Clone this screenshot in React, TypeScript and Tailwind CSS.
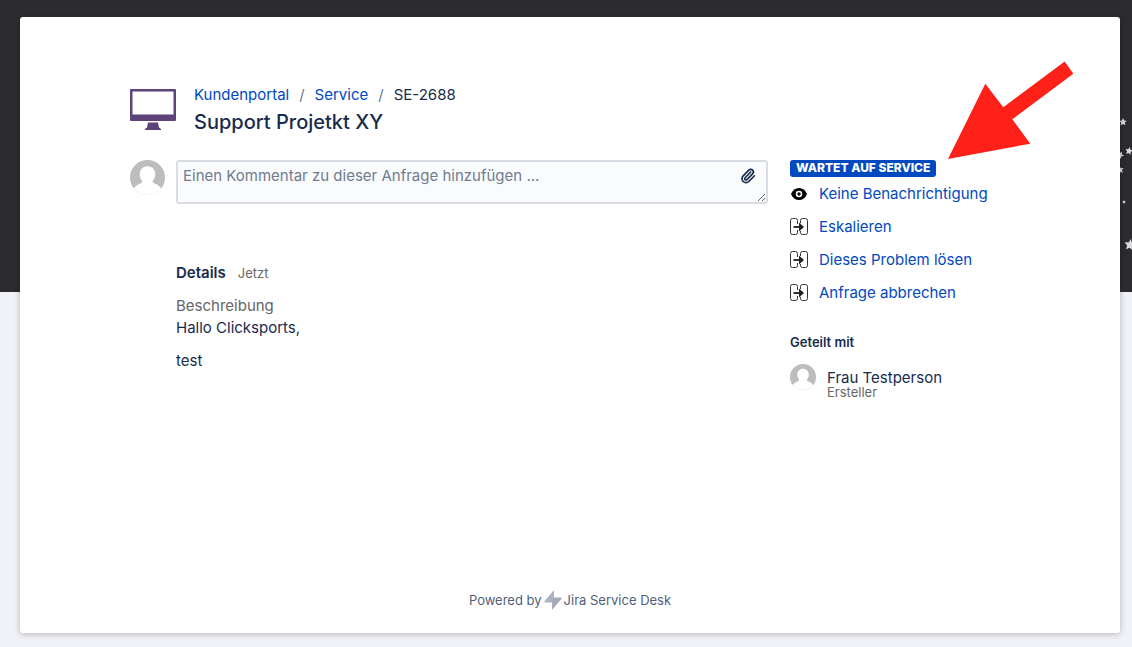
import { Paperclip } from "lucide-react";

const transitions = ["Eskalieren", "Dieses Problem lösen", "Anfrage abbrechen"];

// [x, y, size, rotation] inside the strip at the right end of the banner
const stars = [
    [3, 122, 4, 0],
    [9, 151, 4, 12],
    [0, 155, 4, 30],
    [0, 170, 4, -10],
    [4, 202, 2, 0],
    [10, 245, 6, 8],
];

function Avatar({ className }: { className: string }) {
    return (
        <svg viewBox="0 0 36 36" className={className} aria-hidden="true">
            <clipPath id="avatar-clip">
                <circle cx="18" cy="18" r="18" />
            </clipPath>
            <g clipPath="url(#avatar-clip)">
                <rect width="36" height="36" fill="#bdbdbd" />
                <path
                    d="M18 6.5c5 0 8 3.7 8 8.3 0 3.2-1.4 5.4-2.8 7 .3 1.6 1.6 2.2 4 3.2 3 1.3 4.5 4 6.8 6.5V37H2v-5.5C4.3 29 5.800 26.300 8.800 25c2.400-1 3.700-1.600 4-3.200-1.400-1.600-2.800-3.800-2.800-7 0-4.600 3-8.300 8-8.300Z"
                    fill="#fff"
                />
            </g>
        </svg>
    );
}

function MonitorIcon() {
    return (
        <svg viewBox="0 0 46 42" className="mt-1 h-[42px] w-[46px] shrink-0" fill="#5e4379" aria-hidden="true">
            <path fillRule="evenodd" d="M1 0h44a1 1 0 0 1 1 1v30a1 1 0 0 1-1 1H1a1 1 0 0 1-1-1V1a1 1 0 0 1 1-1Zm1.5 2.500v23h41v-23Z" />
            <path d="M18 33.500h10l1 5 2 1.500v1H15v-1l2-1.500Z" />
        </svg>
    );
}

function EyeIcon() {
    return (
        <svg viewBox="0 0 18 18" className="h-[18px] w-[18px]" aria-hidden="true">
            <path d="M1 9C2.5 5 5.500 3 9 3s6.500 2 8 6c-1.500 4-4.500 6-8 6S2.500 13 1 9Z" fill="#000" />
            <circle cx="9" cy="9" r="2.5" fill="none" stroke="#fff" strokeWidth="1.5" />
        </svg>
    );
}

function TransitionIcon() {
    return (
        <svg viewBox="0 0 18 18" className="h-[18px] w-[18px]" fill="none" stroke="#333" aria-hidden="true">
            <path d="M7.5 6V2.500a2 2 0 0 0-2-2h-3a2 2 0 0 0-2 2v12a2 2 0 0 0 2 2h3a2 2 0 0 0 2-2V12" />
            <path d="M10.500 5V2.500a2 2 0 0 1 2-2h3a2 2 0 0 1 2 2v12a2 2 0 0 1-2 2h-3a2 2 0 0 1-2-2V13" />
            <path d="M3.500 9h7" strokeWidth="2" />
            <path d="M9 4.500 14 9l-5 4.500z" fill="#222" stroke="none" />
        </svg>
    );
}

function BoltIcon() {
    return (
        <svg viewBox="0 0 18 20" className="h-5 w-[18px]" aria-hidden="true">
            <path d="M10 0v9l-1.500 3.500H1.300a.9.9 0 0 1-.7-1.500Z" fill="#adb4c0" />
            <path d="M8 20v-9l2-3.500h6.700a.9.9 0 0 1 .7 1.500Z" fill="#a3abb8" />
        </svg>
    );
}

function PointerArrow() {
    return (
        <svg
            viewBox="0 0 126 99"
            className="pointer-events-none absolute top-11 right-[46px] h-[99px] w-[126px]"
            aria-hidden="true"
        >
            <path d="M0 98 37.300 22.700l18 23.600L116.700.5l8.600 12.200-61 45.600 18 24.400Z" fill="#ff2018" />
        </svg>
    );
}

function Banner() {
    return (
        <div className="absolute inset-x-0 top-0 h-[292px] overflow-hidden bg-[#2b2b30]">
            <svg viewBox="0 0 12 292" className="ml-auto h-full w-3" fill="#dcdcdf" aria-hidden="true">
                {stars.map(([x, y, size, turn]) => (
                    <path
                        key={y}
                        transform={`translate(${x} ${y}) rotate(${turn}) scale(${size})`}
                        d="M0-1 .28-.38.95-.31.45.15.59.81 0 .48-.59.81-.45.15-.95-.31-.28-.38Z"
                    />
                ))}
            </svg>
        </div>
    );
}

export default function App() {
    return (
        <div className="relative flex min-h-screen flex-col bg-[#f1f2f7] pt-[17px] pr-3 pb-[14px] pl-5 font-[Inter,sans-serif] text-[15px] leading-5 text-[#172b4d]">
            <Banner />

            <div className="relative flex flex-1 flex-col rounded-[3px] bg-white px-[110px] pt-17 shadow-[0_1px_6px_rgba(0,0,0,0.25)]">
                <header className="flex gap-[18px]">
                    <MonitorIcon />
                    <div>
                        <nav aria-label="Breadcrumb">
                            <ol className="flex">
                                <li><a href="#portal" className="text-[#0049bf]">Kundenportal</a></li>
                                <li className="px-[10px] text-[#6b778c]" aria-hidden="true">/</li>
                                <li><a href="#service" className="text-[#0049bf]">Service</a></li>
                                <li className="px-[10px] text-[#6b778c]" aria-hidden="true">/</li>
                                <li>SE-2688</li>
                            </ol>
                        </nav>
                        <h1 className="text-xl leading-[34px] font-medium">Support Projetkt XY</h1>
                    </div>
                </header>

                <div className="mt-[21px] flex gap-[22px]">
                    <main className="min-w-0 flex-1">
                        <form className="flex gap-[11px]">
                            <Avatar className="h-[35px] w-[35px] shrink-0" />
                            <div className="relative flex flex-1">
                                <textarea
                                    aria-label="Kommentar"
                                    placeholder="Einen Kommentar zu dieser Anfrage hinzufügen ..."
                                    className="h-11 w-full resize-y rounded-[3px] border-2 border-[#dadde3] bg-[#fafbfc] px-[5px] py-1 placeholder:text-[#6f7c91]"
                                />
                                <button type="button" aria-label="Datei anhängen" className="absolute top-2 right-3">
                                    <Paperclip className="h-4 w-4" strokeWidth={2.5} />
                                </button>
                            </div>
                        </form>

                        <section className="mt-[59px] pl-[46px]">
                            <div className="flex items-baseline gap-3">
                                <h2 className="font-semibold">Details</h2>
                                <span className="text-[13px] text-[#666]">Jetzt</span>
                            </div>
                            <dl className="mt-3 leading-[22px]">
                                <dt className="text-[#666]">Beschreibung</dt>
                                <dd className="flex flex-col gap-[11px]">
                                    <p>Hallo Clicksports,</p>
                                    <p>test</p>
                                </dd>
                            </dl>
                        </section>
                    </main>

                    <aside className="w-[220px] shrink-0">
                        <div className="flex">
                            <span className="rounded-[3px] bg-[#0049bf] px-[6px] pb-px text-[12px] leading-4 font-extrabold text-white">WARTET AUF SERVICE</span>
                        </div>
                        <ul className="mt-[7px] flex flex-col gap-[13px] text-[#0049bf]">
                            <li>
                                <a href="#notify" className="flex items-center gap-[11px]">
                                    <EyeIcon />
                                    Keine Benachrichtigung
                                </a>
                            </li>
                            {transitions.map((name) => (
                                <li key={name}>
                                    <a href="#transition" className="flex items-center gap-[11px]">
                                        <TransitionIcon />
                                        {name}
                                    </a>
                                </li>
                            ))}
                        </ul>

                        <h2 className="mt-[29px] text-[13px] font-semibold">Geteilt mit</h2>
                        <div className="mt-3 flex gap-[11px]">
                            <Avatar className="h-[26px] w-[26px] shrink-0" />
                            <div className="pt-[6px]">
                                <p className="leading-4">Frau Testperson</p>
                                <p className="text-[13px] leading-3 text-[#666]">Ersteller</p>
                            </div>
                        </div>
                    </aside>
                </div>

                <footer className="mt-auto flex items-center justify-center gap-[2px] pt-8 pb-[23px] text-[13px] text-[#505f79]">
                    Powered by
                    <BoltIcon />
                    Jira Service Desk
                </footer>

                <PointerArrow />
            </div>
        </div>
    );
}
